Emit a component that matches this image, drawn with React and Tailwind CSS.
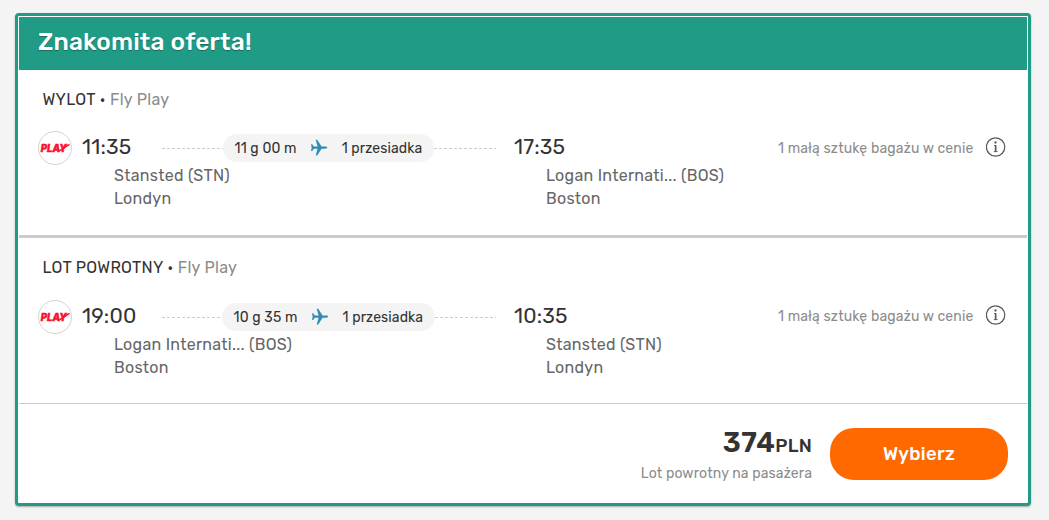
import React from "react";

function PlaneIcon() {
  return (
    <svg className="h-[18px] w-[18px] shrink-0" viewBox="0 0 18 18" fill="#2d8fb8">
      <path d="M17.2 8.6c0-.8-1-1.1-2-1.1h-3.6L7.2.7H5.7l1.9 6.7-3.8.1L2.2 5.3H1l.7 3.3L1 11.9h1.2l1.6-2.2 3.8.1-1.9 6.7h1.5l4.4-6.8h3.6c1 0 2-.3 2-1.1z" />
    </svg>
  );
}

function InfoIcon() {
  return (
    <svg className="-mt-[2px] h-5 w-5 shrink-0" viewBox="0 0 20 20" fill="none" stroke="#555">
      <circle cx="9.6" cy="10" r="9.2" strokeWidth="1.2" />
      <circle cx="9.5" cy="5.5" r="1.15" fill="#555" stroke="none" />
      <path d="M8 8.5h1.7v6M7.8 14.6h3.8" strokeWidth="0.9" />
      <path d="M9.6 8.2v6.3" strokeWidth="1.5" />
    </svg>
  );
}

function AirlineLogo() {
  return (
    <div className="flex h-[34px] w-[34px] shrink-0 items-center justify-center rounded-full border border-[#d4d4d4] bg-white">
      <svg className="h-[12px] w-[30px] shrink-0" viewBox="0 0 30 12">
        <text
          x="0.8"
          y="10"
          textLength="26"
          lengthAdjust="spacingAndGlyphs"
          fill="#fb1230"
          stroke="#fb1230"
          strokeWidth="0.4"
          className="font-['Inter',sans-serif] text-[10px] font-black italic"
        >
          PLAY
        </text>
        <path d="M29.5 2.4L19 9.2" stroke="#fb1230" strokeWidth="1.5" />
      </svg>
    </div>
  );
}

function Stop({ time, airport, city }) {
  return (
    <div className="whitespace-nowrap">
      <div className="h-[32px] text-[21px] leading-[32px] tracking-[0.2px] text-[#333]">{time}</div>
      <div className="pl-8 pt-[1px] text-base leading-[23px] tracking-[0.27px] text-[#666]">
        <div>{airport}</div>
        <div>{city}</div>
      </div>
    </div>
  );
}

function Leg({ title, sectionClass, rowClass, duration, lineClass, pillClass, baggageClass, from, to }) {
  return (
    <section className={`box-content h-[165px] pl-[19px] pr-[21px] ${sectionClass}`}>
      <div className="flex h-[61px] items-start whitespace-pre pl-[4.5px] pt-[18px] text-base leading-6 tracking-[0.27px] text-[#333]">
        <span>{title} • </span>
        <span className="text-[#8c8c8c]">Fly Play</span>
      </div>
      <div className={`flex items-start ${rowClass}`}>
        <AirlineLogo />
        <div className="w-[90px] shrink-0 pl-[10px]">
          <Stop {...from} />
        </div>
        <div className="flex w-[334px] shrink-0 items-center pt-[3px]">
          <div className={`h-px shrink-0 bg-[repeating-linear-gradient(90deg,#ccc_0_3px,transparent_3px_5px)] ${lineClass}`} />
          <div className={`flex h-7 shrink-0 items-center whitespace-nowrap rounded-full bg-[#f4f4f4] pl-[11.5px] text-sm text-[#333] ${pillClass}`}>
            <span className="pt-px tracking-[0.15px]">{duration}</span>
            <span className="ml-[13px] mr-[14px]"><PlaneIcon /></span>
            <span className="pt-px tracking-[0.1px]">1 przesiadka</span>
          </div>
          <div className="h-px flex-1 bg-[repeating-linear-gradient(90deg,#ccc_0_3px,transparent_3px_5px)]" />
        </div>
        <div className="ml-[18px]">
          <Stop {...to} />
        </div>
        <div className={`ml-auto flex items-center gap-3 whitespace-nowrap pr-[0.5px] ${baggageClass}`}>
          <span className="pt-[2px] text-sm leading-5 tracking-[0.15px] text-[#8c8c8c]">1 małą sztukę bagażu w cenie</span>
          <InfoIcon />
        </div>
      </div>
    </section>
  );
}

export default function App() {
  return (
    <main className="h-[520px] bg-[#f4f4f4] pl-[15px] pt-[13px] font-['Rubik',Roboto,sans-serif]">
      <article className="h-[493px] w-[1016px] rounded-[4px] border-[3px] border-[#209b85] bg-white p-px shadow-[0_1px_2px_rgba(0,0,0,0.3)]">
        <header className="h-[53px] bg-[#209b85] pl-[19px] pt-[9px] text-[24.5px] font-medium leading-8 tracking-[0.2px] text-white [text-shadow:0_1px_1px_rgba(0,0,0,0.3)]">
          Znakomita oferta!
        </header>
        <Leg
          title="WYLOT"
          sectionClass="border-b-[3px] border-[#ccc]"
          rowClass=""
          baggageClass="pt-[6px]"
          duration="11 g 00 m"
          lineClass="w-[61px]"
          pillClass="w-[211px]"
          from={{ time: "11:35", airport: "Stansted (STN)", city: "Londyn" }}
          to={{ time: "17:35", airport: "Logan Internati... (BOS)", city: "Boston" }}
        />
        <Leg
          title="LOT POWROTNY"
          sectionClass="border-b border-[#ccc]"
          rowClass="pt-px"
          baggageClass="pt-[5px]"
          duration="10 g 35 m"
          lineClass="w-[60px]"
          pillClass="w-[213px]"
          from={{ time: "19:00", airport: "Logan Internati... (BOS)", city: "Boston" }}
          to={{ time: "10:35", airport: "Stansted (STN)", city: "Londyn" }}
        />
        <footer className="flex justify-end gap-[18px] pr-[19px] pt-6">
          <div className="whitespace-nowrap pt-px text-right">
            <div className="flex items-baseline justify-end leading-7 text-[#333]">
              <span className="text-[28px] font-semibold tracking-[0.3px]">374</span>
              <span className="text-[18.5px] font-medium tracking-[0.27px]">PLN</span>
            </div>
            <div className="pt-1 text-sm leading-5 tracking-[0.13px] text-[#8c8c8c]">Lot powrotny na pasażera</div>
          </div>
          <button className="h-[52px] w-[178px] rounded-[24px] bg-[#ff6900] pt-px text-[18.5px] font-medium tracking-[0.27px] text-white">
            Wybierz
          </button>
        </footer>
      </article>
    </main>
  );
}
